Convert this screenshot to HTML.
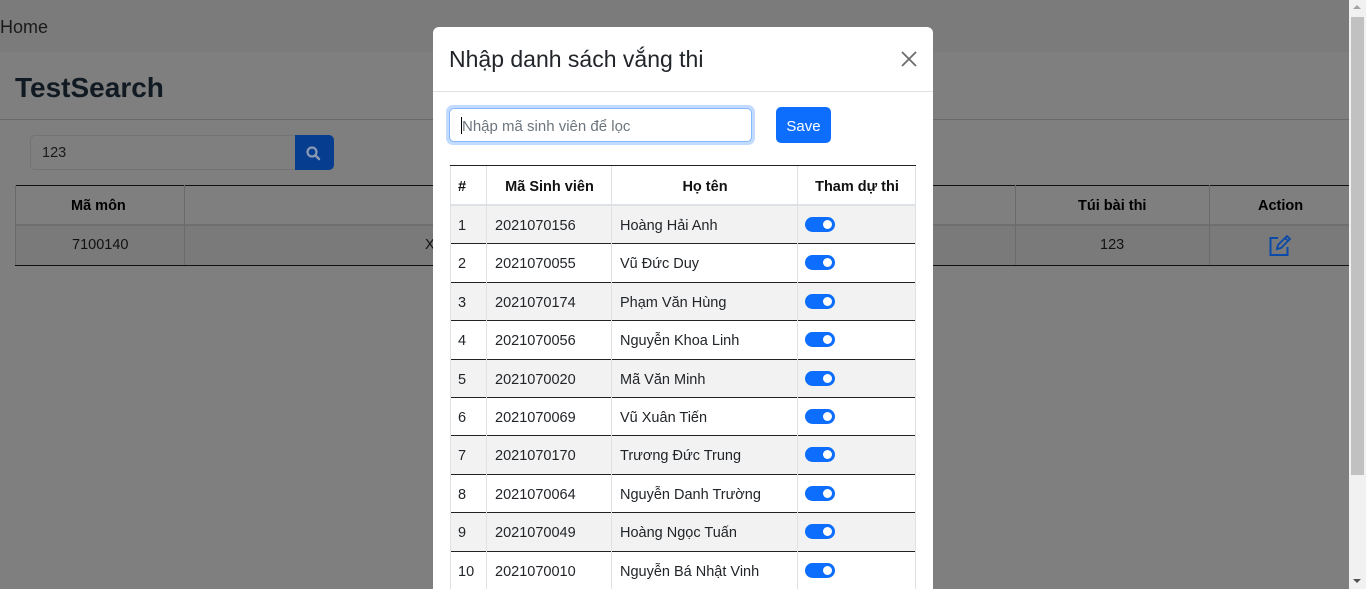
<!DOCTYPE html>
<html style="overflow:hidden;height:589px"><head><meta charset="utf-8"><style>
*{box-sizing:border-box;margin:0;padding:0}
html,body{overflow:hidden}
body{width:1366px;height:589px;position:relative;background:#7f7f7f;font-family:"Liberation Sans",sans-serif;color:#111}
.a{position:absolute}
.cell{position:absolute;display:flex;align-items:center;font-size:14.5px}
.sw{position:absolute;width:30px;height:15px;border-radius:8px;background:#0d6efd}
.sw::after{content:"";position:absolute;right:3px;top:3px;width:9px;height:9px;border-radius:50%;background:#fff}
</style></head><body>
<div class="a" style="left:0;top:0;width:1349px;height:52px;background:#7b7b7b"></div>
<div class="a" style="left:0;top:17px;font-size:18px;color:#1a1a1a">Home</div>
<div class="a" style="left:15px;top:72px;font-size:28px;font-weight:bold;color:#111a22">TestSearch</div>
<div class="a" style="left:0;top:119px;width:1349px;height:1px;background:#6a6a6a"></div>
<div class="a" style="left:30px;top:135px;width:266px;height:35px;border:1px solid #737373;border-radius:5px 0 0 5px"></div>
<div class="a" style="left:42px;top:145px;font-size:14.5px;color:#1a1a1a">123</div>
<div class="a" style="left:295px;top:135px;width:39px;height:35px;background:#063d8f;border-radius:0 5px 5px 0"></div>
<svg class="a" style="left:305px;top:145px" width="18" height="16" viewBox="0 0 18 16"><circle cx="7" cy="7" r="4.5" fill="none" stroke="#8a9ab5" stroke-width="2.2"/><path d="M10.5 10.5 14 14" stroke="#8a9ab5" stroke-width="2.5" stroke-linecap="round"/></svg>
<div class="a" style="left:15px;top:185px;width:1334px;height:1px;background:#111"></div>
<div class="a" style="left:15px;top:224px;width:1334px;height:2px;background:#6f6f6f"></div>
<div class="a" style="left:15px;top:226px;width:1334px;height:39px;background:#7a7a7a"></div>
<div class="a" style="left:15px;top:265px;width:1334px;height:1px;background:#111"></div>
<div class="a" style="left:15px;top:185px;width:1px;height:80px;background:#6a6a6a"></div>
<div class="a" style="left:184px;top:185px;width:1px;height:80px;background:#6a6a6a"></div>
<div class="a" style="left:1015px;top:185px;width:1px;height:80px;background:#6a6a6a"></div>
<div class="a" style="left:1209px;top:185px;width:1px;height:80px;background:#6a6a6a"></div>
<div class="a" style="left:71px;top:198px;font-size:14.5px;font-weight:bold;color:#000">Mã môn</div>
<div class="a" style="left:72px;top:237px;font-size:14.5px;color:#111">7100140</div>
<div class="a" style="left:425px;top:237px;font-size:14.5px;color:#111">X</div>
<div class="a" style="left:1078px;top:198px;font-size:14.5px;font-weight:bold;color:#000">Túi bài thi</div>
<div class="a" style="left:1258px;top:198px;font-size:14.5px;font-weight:bold;color:#000">Action</div>
<div class="a" style="left:1100px;top:237px;font-size:14.5px;color:#111">123</div>
<svg class="a" style="left:1268px;top:235px" width="24" height="22" viewBox="0 0 24 22"><path d="M10 3H2.5v17h17v-8" fill="none" stroke="#0a4aa8" stroke-width="2"/><path d="M9 14l1-4 9-9 3 3-9 9z M17 3l3 3" fill="none" stroke="#0a4aa8" stroke-width="1.8"/></svg>
<div class="a" style="left:1349px;top:0;width:17px;height:589px;background:#f1f1f1"></div>
<div class="a" style="left:1351px;top:17px;width:13px;height:458px;background:#c1c1c1"></div>
<div class="a" style="left:1353px;top:5px;width:0;height:0;border-left:4px solid transparent;border-right:4px solid transparent;border-bottom:4px solid #a3a3a3"></div>
<div class="a" style="left:1353px;top:579px;width:0;height:0;border-left:4px solid transparent;border-right:4px solid transparent;border-top:4px solid #505050"></div>

<div class="a" style="left:433px;top:27px;width:500px;height:562px;background:#fff;border-radius:6px 6px 0 0"></div>
<div class="a" style="left:449px;top:46px;font-size:23px;color:#212529">Nhập danh sách vắng thi</div>
<svg class="a" style="left:900px;top:50px" width="18" height="18" viewBox="0 0 18 18"><path d="M2 2 16 16M16 2 2 16" stroke="#6c6c6c" stroke-width="1.8"/></svg>
<div class="a" style="left:433px;top:91px;width:500px;height:1px;background:#dee2e6"></div>
<div class="a" style="left:446px;top:105px;width:309px;height:40px;border-radius:7px;background:#c2dbfe"></div>
<div class="a" style="left:449px;top:108px;width:303px;height:34px;border:1px solid #86b7fe;border-radius:5px;background:#fff"></div>
<div class="a" style="left:461px;top:117px;width:1px;height:17px;background:#000"></div>
<div class="a" style="left:462px;top:118px;font-size:15px;color:#6c757d">Nhập mã sinh viên để lọc</div>
<div class="a" style="left:776px;top:107px;width:55px;height:36px;background:#0d6efd;border-radius:5px;color:#fff;font-size:15px;display:flex;align-items:center;justify-content:center;padding-top:2px">Save</div>
<div class="a" style="left:450px;top:165px;width:466px;height:1px;background:#222"></div>
<div id="t"></div>
<script>
var rows=[["1","2021070156","Hoàng Hải Anh"],["2","2021070055","Vũ Đức Duy"],["3","2021070174","Phạm Văn Hùng"],["4","2021070056","Nguyễn Khoa Linh"],["5","2021070020","Mã Văn Minh"],["6","2021070069","Vũ Xuân Tiến"],["7","2021070170","Trương Đức Trung"],["8","2021070064","Nguyễn Danh Trường"],["9","2021070049","Hoàng Ngọc Tuấn"],["10","2021070010","Nguyễn Bá Nhật Vinh"]];
var h='';
h+='<div class="a" style="left:450px;top:204px;width:466px;height:2px;background:#dee2e6"></div>';
h+='<div class="cell" style="left:458px;top:167px;height:39px;font-weight:bold">#</div>';
h+='<div class="cell" style="left:487px;top:167px;width:125px;height:39px;justify-content:center;font-weight:bold">Mã Sinh viên</div>';
h+='<div class="cell" style="left:612px;top:167px;width:186px;height:39px;justify-content:center;font-weight:bold">Họ tên</div>';
h+='<div class="cell" style="left:798px;top:167px;width:118px;height:39px;justify-content:center;font-weight:bold">Tham dự thi</div>';
for(var i=0;i<10;i++){var t=206+i*38.4;var r=rows[i];
if(i%2==0)h+='<div class="a" style="left:450px;top:'+t+'px;width:466px;height:37.4px;background:#f2f2f2"></div>';
h+='<div class="a" style="left:450px;top:'+(t+37.4)+'px;width:466px;height:1px;background:#222"></div>';
h+='<div class="cell" style="left:458px;top:'+(t+1.5)+'px;height:37px;color:#212529">'+r[0]+'</div>';
h+='<div class="cell" style="left:495px;top:'+(t+1.5)+'px;height:37px;color:#212529">'+r[1]+'</div>';
h+='<div class="cell" style="left:620px;top:'+(t+1.5)+'px;height:37px;color:#212529">'+r[2]+'</div>';
h+='<div class="sw" style="left:805px;top:'+(t+11)+'px"></div>';}
[450,486,611,797,915].forEach(function(x){h+='<div class="a" style="left:'+x+'px;top:166px;width:1px;height:430px;background:#dee2e6"></div>';});
document.getElementById('t').innerHTML=h;
</script>
</body></html>
